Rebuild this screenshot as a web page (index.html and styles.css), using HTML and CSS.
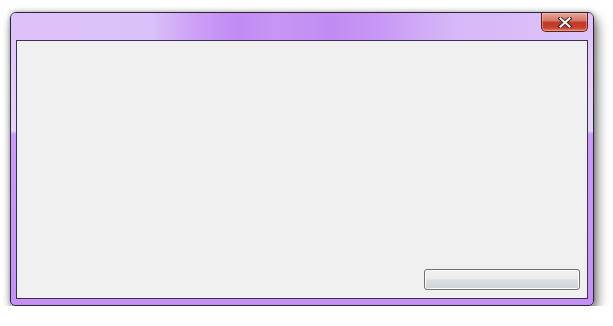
FILE: index.html
```html
<!DOCTYPE html>
<html lang="en">
<head>
  <meta charset="UTF-8">
  <title>Dialog</title>
  <link rel="stylesheet" href="styles.css">
</head>
<body>
  <div class="window">
    <!-- Title bar -->
    <div class="titlebar">
      <button class="close-btn" title="Close">
        <svg width="14" height="11" viewBox="0 0 14 11">
          <path d="M2.5 1.5 L11.5 9.5 M11.5 1.5 L2.5 9.5" stroke="#3b2626" stroke-width="4" stroke-linecap="square"/>
          <path d="M2.5 1.5 L11.5 9.5 M11.5 1.5 L2.5 9.5" stroke="#f4f4f4" stroke-width="2" stroke-linecap="square"/>
        </svg>
      </button>
    </div>

    <!-- Client area -->
    <div class="client">
      <button class="action-btn"></button>
    </div>
  </div>
</body>
</html>
```

FILE: styles.css
```css
/* General */
body {
  margin: 0;
  background: #ffffff;
  font-family: 'Liberation Sans', Arial, sans-serif;
}

/* Window frame */
.window {
  margin: 12px 0 0 10px;
  width: 582px;
  height: 292px;
  border: 1px solid #2e2238;
  border-radius: 6px 6px 5px 5px;
  background: linear-gradient(to bottom, #dcc6f8 0, #e4d4f8 118px, #c99cf6 121px, #c490f6 100%);
  box-shadow: 3px 6px 12px rgba(0, 0, 0, 0.55), 0 0 5px rgba(0, 0, 0, 0.3);
  display: flex;
  flex-direction: column;
  overflow: hidden;
}

.titlebar {
  height: 27px;
  display: flex;
  justify-content: flex-end;
  align-items: flex-start;
  padding-right: 5px;
  background: linear-gradient(to right,
    #dcc2f9 0%, #dbc1f9 24%, #cc9ef6 32%, #c08cf4 39%,
    #c796f5 46%, #c08cf3 55%, #c897f6 63%, #d6b8f8 76%, #dcc3f9 100%);
}

/* Close button */
.close-btn {
  width: 47px;
  height: 19px;
  margin: 0;
  padding: 0;
  border: 1px solid #5a2020;
  border-top: none;
  border-radius: 0 0 5px 5px;
  background: linear-gradient(to bottom, #e8a898 0, #d57362 45%, #c03a28 50%, #c8402c 80%, #e07a62 100%);
  box-shadow: inset 0 0 0 1px rgba(255, 200, 190, 0.45);
  display: flex;
  align-items: center;
  justify-content: center;
}

/* Client area */
.client {
  flex: 1;
  margin: 0 5px 6px 5px;
  border: 1px solid #3f2f4e;
  background: #f0f0f0;
  display: flex;
  justify-content: flex-end;
  align-items: flex-end;
  padding: 0 7px 8px 0;
}

.action-btn {
  width: 156px;
  height: 21px;
  border: 1px solid #707070;
  border-radius: 3px;
  background: linear-gradient(to bottom, #f2f2f2 0, #ebebeb 48%, #dcdfe1 52%, #d0d4d7 100%);
  box-shadow: inset 0 0 0 1px #fcfcfc;
}
```
